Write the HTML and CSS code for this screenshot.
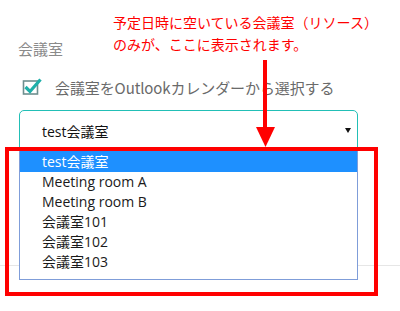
FILE: index.html
```html
<!DOCTYPE html>
<html lang="ja">
<head>
<meta charset="utf-8">
<link rel="stylesheet" href="styles.css">
</head>
<body>
<main class="panel">
  <section class="field">
    <div class="label">会議室</div>
    <label class="check">
      <svg class="check-icon" width="21" height="18" viewBox="0 0 21 18">
        <rect x="1.5" y="4" width="14" height="13" fill="none" stroke="#6d8f8f" stroke-width="1.6"/>
        <path d="M3.5 10 L8 14.5 L18.5 2.5" fill="none" stroke="#1fb0aa" stroke-width="3.2"/>
      </svg>
      <span>会議室をOutlookカレンダーから選択する</span>
    </label>
    <div class="select-wrap">
      <div class="select">
        <span>test会議室</span>
        <svg class="caret" width="6" height="5" viewBox="0 0 6 5"><path d="M0 0 H6 L3 5 Z" fill="#111"/></svg>
      </div>
      <ul class="options">
        <li class="option selected">test会議室</li>
        <li class="option">Meeting room A</li>
        <li class="option">Meeting room B</li>
        <li class="option">会議室101</li>
        <li class="option">会議室102</li>
        <li class="option">会議室103</li>
      </ul>
    </div>
  </section>
  <hr class="divider">
</main>

<p class="note">予定日時に空いている会議室（リソース）<br>のみが、ここに表示されます。</p>
<svg class="arrow" width="20" height="88" viewBox="0 0 20 88">
  <rect x="7" y="0" width="4" height="70" fill="#ff0000"/>
  <polygon points="0,67 19,67 9.5,87" fill="#ff0000"/>
</svg>
<div class="frame"></div>
</body>
</html>
```

FILE: styles.css
```css
html, body {
  margin: 0;
  padding: 0;
  background: #fff;
}

body {
  width: 400px;
  height: 311px;
  overflow: hidden;
  position: relative;
  font-family: "Open Sans", "Noto Sans CJK JP", sans-serif;
}

.panel {
  padding-top: 39px;
}

.field {
  padding-left: 18px;
}

.label {
  font-family: "Noto Sans CJK JP", sans-serif;
  font-size: 15px;
  line-height: 20px;
  color: #8a8a8a;
}

.check {
  display: flex;
  align-items: center;
  margin-top: 18px;
  margin-left: 4px;
  height: 20px;
  font-size: 15px;
  color: #6a6a6a;
}

.check-icon {
  display: block;
  margin-top: -3px;
}

.check span {
  margin-left: 12px;
  font-family: "Noto Sans CJK JP", sans-serif;
  letter-spacing: -0.1px;
}

.select-wrap {
  position: relative;
  margin-top: 13px;
  margin-left: 1px;
  width: 339px;
}

.select {
  box-sizing: border-box;
  height: 42px;
  border: 1px solid #22bfb6;
  border-radius: 5px;
  display: flex;
  align-items: center;
  justify-content: space-between;
  padding: 0 6px 0 22px;
  font-size: 14px;
  color: #111;
}

.caret {
  display: block;
  margin-top: -2px;
}

.options {
  position: absolute;
  z-index: 2;
  top: 40px;
  left: 0;
  box-sizing: border-box;
  width: 339px;
  margin: 0;
  padding: 0 0 7px;
  list-style: none;
  background: #fff;
  border: 1px solid #7f9dd9;
}

.option {
  height: 20px;
  line-height: 20px;
  padding-left: 22px;
  font-size: 14px;
  color: #1a1a1a;
  white-space: nowrap;
}

.option.selected {
  height: 21px;
  line-height: 21px;
  background: #1e90ff;
  color: #fff;
}

.divider {
  margin: 113px 0 0;
  border: 0;
  height: 1px;
  background: #e6e6e6;
}

.note {
  position: absolute;
  left: 113px;
  top: 11px;
  margin: 0;
  font-family: "Noto Sans CJK JP", sans-serif;
  font-size: 14px;
  line-height: 22px;
  color: #ff0000;
  white-space: nowrap;
}

.arrow {
  position: absolute;
  left: 256px;
  top: 60px;
  z-index: 4;
}

.frame {
  position: absolute;
  z-index: 5;
  left: 5px;
  top: 147px;
  width: 373px;
  height: 149px;
  box-sizing: border-box;
  border: 4px solid #ff0000;
}
```
